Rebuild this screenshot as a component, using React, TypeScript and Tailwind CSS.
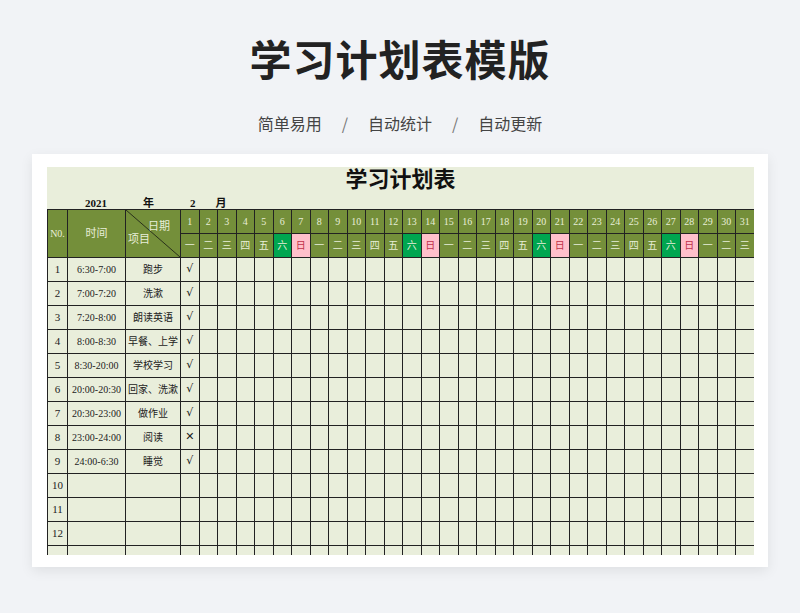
import React from "react";

const wd = ["一","二","三","四","五","六","日"];
const rows: [string,string,string][] = [
  ["6:30-7:00","跑步","√"],["7:00-7:20","洗漱","√"],["7:20-8:00","朗读英语","√"],["8:00-8:30","早餐、上学","√"],
  ["8:30-20:00","学校学习","√"],["20:00-20:30","回家、洗漱","√"],["20:30-23:00","做作业","√"],["23:00-24:00","阅读","✕"],
  ["24:00-6:30","睡觉","√"],["","",""],["","",""],["","",""],["","",""],
];
const days = Array.from({length:31},(_,i)=>i+1);

export default function App() {
  const serif = { fontFamily: '"Liberation Serif","Noto Sans CJK SC",serif' };
  return (
    <div className="w-[800px] h-[613px] bg-[#f1f3f6] flex flex-col items-center" style={{fontFamily:'"Noto Sans CJK SC",sans-serif'}}>
      <h1 className="mt-[32px] text-[42px] leading-[52px] font-bold text-[#222] tracking-[1px]">学习计划表模版</h1>
      <div className="mt-[27px] text-[16px] leading-[24px] text-[#444] flex gap-[20px]">
        <span>简单易用</span><span className="text-[#777]">/</span><span>自动统计</span><span className="text-[#777]">/</span><span>自动更新</span>
      </div>
      <div className="mt-[19px] w-[736px] h-[413px] bg-white shadow-[0_4px_12px_rgba(0,0,0,0.08)] pt-[13px] pl-[15px]">
        <div className="w-[707px] h-[388px] overflow-hidden bg-[#e9eedb]" style={serif}>
          <div className="h-[42px] relative">
            <div className="text-center text-[22px] leading-[26px] font-bold text-[#111]">学习计划表</div>
            <div className="absolute left-0 top-[28px] text-[11px] font-bold flex text-[#111]">
              <span className="ml-[38px]">2021</span><span className="ml-[36px]">年</span><span className="ml-[36px]">2</span><span className="ml-[20px]">月</span>
            </div>
          </div>
          <table className="border-collapse table-fixed text-[10px] text-[#222]" style={{width:707}}>
            <colgroup>
              <col style={{width:20}}/><col style={{width:58}}/><col style={{width:55}}/>
              {days.map(d=><col key={d} style={{width:18.5}}/>)}
            </colgroup>
            <tbody>
              <tr className="h-[24px] bg-[#748f3a] text-[#e8eed8]">
                <td rowSpan={2} className="border border-[#222] text-center">N0.</td>
                <td rowSpan={2} className="border border-[#222] text-center text-[11px]">时间</td>
                <td rowSpan={2} className="border border-[#222] relative p-0 text-[11px]">
                  <svg className="absolute inset-0" width="100%" height="100%" preserveAspectRatio="none" viewBox="0 0 10 10"><line x1="0" y1="0" x2="10" y2="10" stroke="#111" strokeWidth="0.15"/></svg>
                  <span className="absolute right-[10px] top-[8px]">日期</span>
                  <span className="absolute left-[2px] bottom-[10px]">项目</span>
                </td>
                {days.map(d=><td key={d} className="border border-[#222] text-center">{d}</td>)}
              </tr>
              <tr className="h-[24px] bg-[#748f3a] text-[#e8eed8]">
                {days.map(d=>{const w=(d-1)%7;return <td key={d} className={"border border-[#222] text-center "+(w===5?"bg-[#00a650]":w===6?"bg-[#ffc0cb] text-[#c0304a]":"")}>{wd[w]}</td>})}
              </tr>
              {rows.map((r,i)=>(
                <tr key={i} className="h-[24px]">
                  <td className="border border-[#222] text-center text-[11px]">{i<12?i+1:""}</td>
                  <td className="border border-[#222] text-center">{r[0]}</td>
                  <td className="border border-[#222] text-center">{r[1]}</td>
                  {days.map(d=><td key={d} className="border border-[#222] text-center text-[11px] text-[#222]" style={d===1?{fontFamily:'"DejaVu Sans",sans-serif'}:undefined}>{d===1?r[2]:""}</td>)}
                </tr>
              ))}
            </tbody>
          </table>
        </div>
      </div>
    </div>
  );
}
